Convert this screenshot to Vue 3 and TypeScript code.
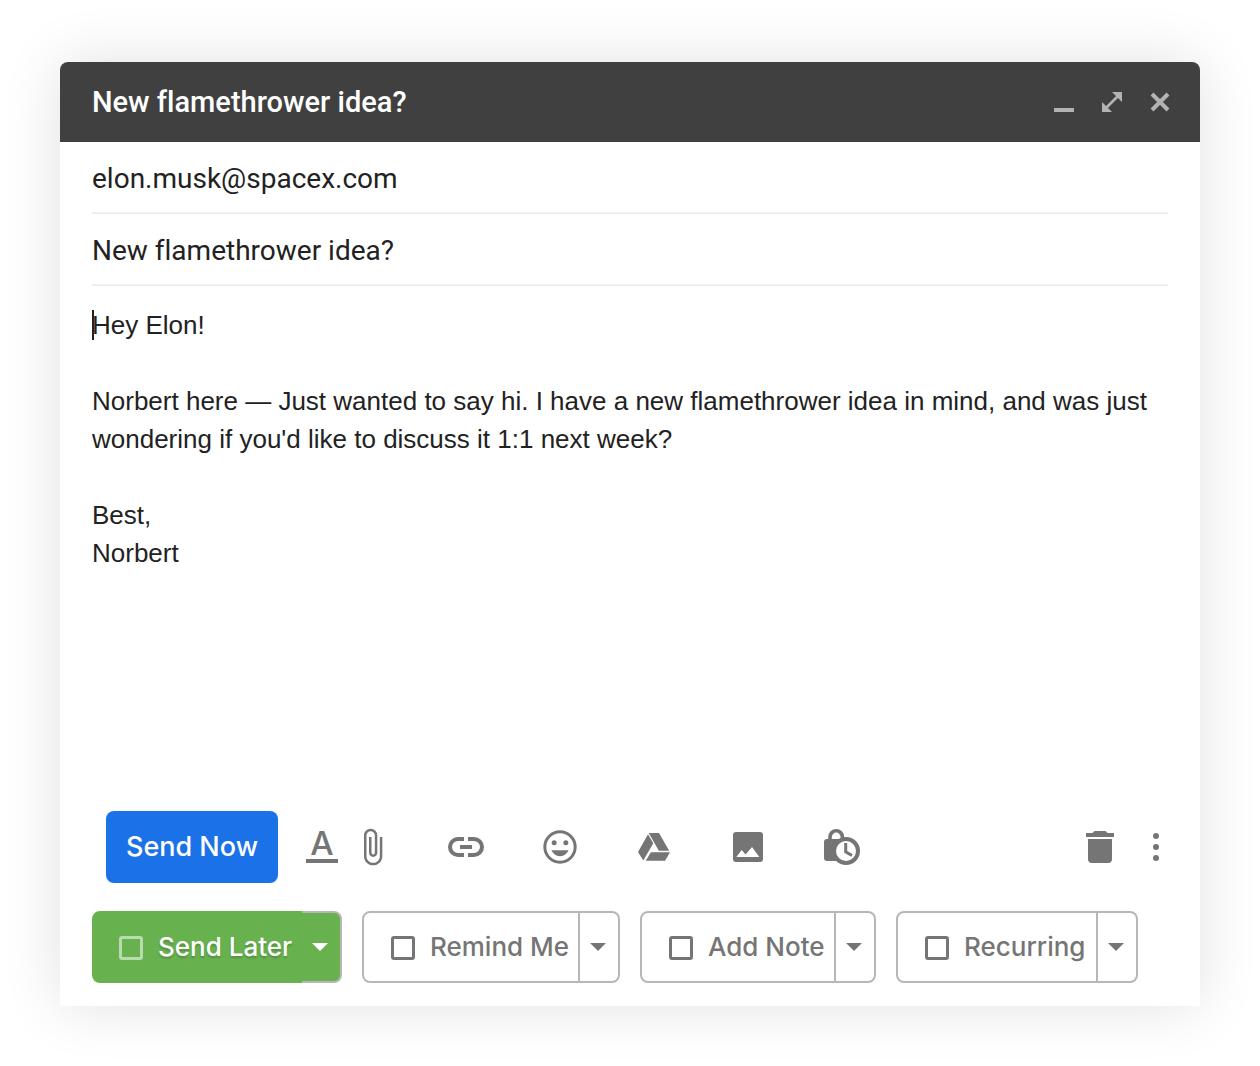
<script setup lang="ts">
import { ref } from 'vue'

interface Option {
  id: string
  label: string
  primary?: boolean
}

const recipient = ref('elon.musk@spacex.com')
const subject = ref('New flamethrower idea?')
const message = ref(
  "Hey Elon!\n\nNorbert here — Just wanted to say hi. I have a new flamethrower idea in mind, and was just wondering if you'd like to discuss it 1:1 next week?\n\nBest,\nNorbert",
)

const options: Option[] = [
  { id: 'send-later', label: 'Send Later', primary: true },
  { id: 'remind-me', label: 'Remind Me' },
  { id: 'add-note', label: 'Add Note' },
  { id: 'recurring', label: 'Recurring' },
]
const checked = ref<string[]>([])
</script>

<template>
  <main class="page">
    <form class="compose" @submit.prevent>
      <header class="bar">
        <h1 class="title">{{ subject }}</h1>
        <div class="window-controls">
          <button type="button" class="win" aria-label="Minimize">
            <svg viewBox="0 0 24 24"><rect x="2" y="18" width="20" height="4" /></svg>
          </button>
          <button type="button" class="win" aria-label="Full screen">
            <svg viewBox="0 0 24 24">
              <path d="M12 2h10v10zM2 12v10h10z" />
              <path class="line" d="M5 19 19 5" stroke-width="2.600" />
            </svg>
          </button>
          <button type="button" class="win" aria-label="Close">
            <svg viewBox="0 0 24 24">
              <path class="line" d="M4 4 20 20M20 4 4 20" stroke-width="4" />
            </svg>
          </button>
        </div>
      </header>

      <div class="fields">
        <input v-model="recipient" class="field" type="text" aria-label="To" />
        <input v-model="subject" class="field" type="text" aria-label="Subject" />
      </div>

      <div class="body">
        <span class="caret" aria-hidden="true"></span>
        <textarea v-model="message" class="message" aria-label="Message body"></textarea>
      </div>

      <div class="toolbar">
        <button type="submit" class="send">Send Now</button>
        <div class="text-tools">
          <button type="button" class="tool format" aria-label="Formatting options">
            <span class="letter">A</span>
          </button>
          <div class="insert-tools">
            <button type="button" class="tool" aria-label="Attach files">
              <svg viewBox="0 0 24 24">
                <path d="M16.700 6v11.500c0 2.210-1.790 4-4 4s-4-1.790-4-4V5c0-1.380 1.120-2.500 2.500-2.500s2.500 1.120 2.500 2.500v10.500c0 .55-.45 1-1 1s-1-.45-1-1V6h-1.500v9.500c0 1.380 1.120 2.500 2.500 2.500s2.500-1.120 2.500-2.500V5c0-2.210-1.790-4-4-4s-4 1.790-4 4v12.500c0 3.040 2.460 5.500 5.500 5.500s5.500-2.460 5.500-5.500V6z" />
              </svg>
            </button>
            <button type="button" class="tool" aria-label="Insert link">
              <svg viewBox="0 0 40 40">
                <path class="line" d="M18 12h-6a8 8 0 0 0 0 16h6M22 12h6a8 8 0 0 1 0 16h-6M14 20h12" stroke-width="4" />
              </svg>
            </button>
            <button type="button" class="tool" aria-label="Insert emoji">
              <svg viewBox="0 0 24 24">
                <circle class="line" cx="12" cy="12" r="9.100" stroke-width="1.800" />
                <circle cx="8.500" cy="9.500" r="1.500" />
                <circle cx="15.500" cy="9.500" r="1.500" />
                <path d="M12 17.500c2.330 0 4.320-1.450 5.120-3.500H6.880c.8 2.050 2.790 3.500 5.120 3.500z" />
              </svg>
            </button>
            <button type="button" class="tool" aria-label="Insert files using Drive">
              <svg viewBox="0 0 40 40">
                <path d="M14.700 6H25l10.200 17.700H24.900zM14 7.300l5.300 8.900-10 17.300L4 25zM16.900 25.300H36l-4.900 8.400H11.700z" />
              </svg>
            </button>
            <button type="button" class="tool" aria-label="Insert photo">
              <svg viewBox="0 0 40 40">
                <rect x="5" y="5" width="30" height="30" rx="3" />
                <path d="M8.300 30l5.400-7 3.800 4.500L24 20l7.300 10z" fill="#fff" />
              </svg>
            </button>
            <button type="button" class="tool" aria-label="Toggle confidential mode">
              <svg viewBox="0 0 40 40">
                <path class="line" d="M8 13V10a6.200 6.200 0 0 1 12.400 0v3" stroke-width="3.600" />
                <rect x="2" y="12" width="24" height="22" rx="3" />
                <circle cx="24" cy="24" r="12" fill="#fff" stroke="currentColor" stroke-width="4" />
                <path class="line" d="M23.700 16v8.800l6.300 3.700" stroke-width="3" />
              </svg>
            </button>
          </div>
        </div>
        <div class="end-tools">
          <button type="button" class="tool" aria-label="Discard draft">
            <svg viewBox="0 0 40 40">
              <path d="M6 6h6.500l2-2h11l2 2H34v4H6zM8 12h24v20a4 4 0 0 1-4 4H12a4 4 0 0 1-4-4z" />
            </svg>
          </button>
          <button type="button" class="tool" aria-label="More options">
            <svg viewBox="0 0 40 40">
              <circle cx="20" cy="9" r="3" />
              <circle cx="20" cy="20" r="3" />
              <circle cx="20" cy="31" r="3" />
            </svg>
          </button>
        </div>
      </div>

      <div class="options">
        <div v-for="o in options" :key="o.id" class="option" :class="{ primary: o.primary }">
          <label class="choice" :for="o.id">
            <input :id="o.id" v-model="checked" class="tick" type="checkbox" :value="o.id" />
            <span>{{ o.label }}</span>
          </label>
          <button type="button" class="drop" :aria-label="o.label + ' settings'">
            <svg viewBox="0 0 16 8"><path d="M0 0h16L8 8z" /></svg>
          </button>
        </div>
      </div>
    </form>
  </main>
</template>

<style>
body {
  margin: 0;
  background: #fff;
}
</style>

<style scoped>
* {
  box-sizing: border-box;
}
.page {
  display: flex;
  min-height: 100vh;
  padding: 62px 60px 60px;
}
.compose {
  display: flex;
  flex: 1;
  flex-direction: column;
  min-width: 0;
  border-radius: 8px 8px 0 0;
  background: #fff;
  box-shadow: 0 0 60px rgba(0, 0, 0, 0.12);
  color: #222;
  font-family: Roboto, sans-serif;
  font-variant-ligatures: none;
}
button {
  padding: 0;
  border: 0;
  background: none;
  color: inherit;
  font: inherit;
  cursor: pointer;
}
svg {
  display: block;
  fill: currentColor;
}
.line {
  fill: none;
  stroke: currentColor;
}
.bar {
  display: flex;
  align-items: center;
  justify-content: space-between;
  height: 80px;
  padding: 0 28px 0 32px;
  border-radius: 8px 8px 0 0;
  background: #404040;
  color: #fff;
}
.title {
  margin: 0;
  font-size: 29px;
  font-weight: 500;
  line-height: 40px;
}
.window-controls {
  display: flex;
  gap: 24px;
  color: #b3b3b3;
}
.win,
.win svg {
  width: 24px;
  height: 24px;
}
.fields {
  display: flex;
  flex-direction: column;
  padding: 0 32px;
}
.field {
  width: 100%;
  height: 72px;
  padding: 2px 0 0;
  border: 0;
  border-bottom: 2px solid #eceff0;
  outline: 0;
  background: none;
  color: #222;
  font: 28px/40px Roboto, sans-serif;
  font-variant-ligatures: none;
}
.body {
  position: relative;
  display: flex;
  flex: 1;
  padding: 20px 32px;
}
.caret {
  position: absolute;
  top: 24px;
  left: 32px;
  width: 2px;
  height: 30px;
  background: #222;
}
.message {
  flex: 1;
  min-height: 300px;
  padding: 0;
  border: 0;
  outline: 0;
  background: none;
  color: #222;
  font: 26px/38px "Liberation Sans", Arial, sans-serif;
  resize: none;
}
.toolbar {
  display: flex;
  align-items: center;
  padding: 0 24px 0 46px;
  color: #757575;
}
.send {
  width: 172px;
  height: 72px;
  border-radius: 8px;
  background: #1b72e8;
  color: #fff;
  font: 500 27px/40px Inter, sans-serif;
}
.text-tools {
  display: flex;
  gap: 10px;
  margin-left: 24px;
}
.insert-tools {
  display: flex;
  gap: 54px;
}
.end-tools {
  display: flex;
  gap: 16px;
  margin-left: auto;
}
.tool,
.tool svg {
  width: 40px;
  height: 40px;
}
.format {
  padding: 0 4px 4px;
}
.letter {
  display: block;
  height: 36px;
  border-bottom: 4px solid currentColor;
  font: 500 33px/32px Inter, sans-serif;
}
.options {
  display: grid;
  grid-template-columns: minmax(0, 250px) minmax(0, 258px) minmax(0, 236px) minmax(0, 242px);
  gap: 20px;
  padding: 28px 32px 23px;
}
.option {
  display: flex;
  height: 72px;
  color: #757575;
  font: 500 26px/40px Inter, sans-serif;
}
.choice {
  display: flex;
  flex: 1;
  align-items: center;
  gap: 15px;
  padding-left: 27px;
  border: 2px solid #b7b7b7;
  border-radius: 8px 0 0 8px;
  white-space: nowrap;
  cursor: pointer;
}
.tick {
  flex: none;
  width: 24px;
  height: 24px;
  margin: 2px 0 0;
  border: 3px solid currentColor;
  border-radius: 3px;
  color: inherit;
  appearance: none;
}
.tick:checked {
  background: currentColor;
}
.drop {
  display: flex;
  align-items: center;
  justify-content: center;
  width: 40px;
  padding-right: 2px;
  border: 2px solid #b7b7b7;
  border-left: 0;
  border-radius: 0 8px 8px 0;
}
.drop svg {
  width: 16px;
  height: 8px;
}
.primary {
  color: #fff;
}
.primary .choice {
  padding-left: 25px;
  border-color: #68b14f;
  background: #68b14f;
  text-shadow: 0 2px 2px rgba(0, 0, 0, 0.2);
}
.primary .tick {
  border-color: #b9dcae;
}
.primary .drop {
  background: #68b14f;
}
</style>
